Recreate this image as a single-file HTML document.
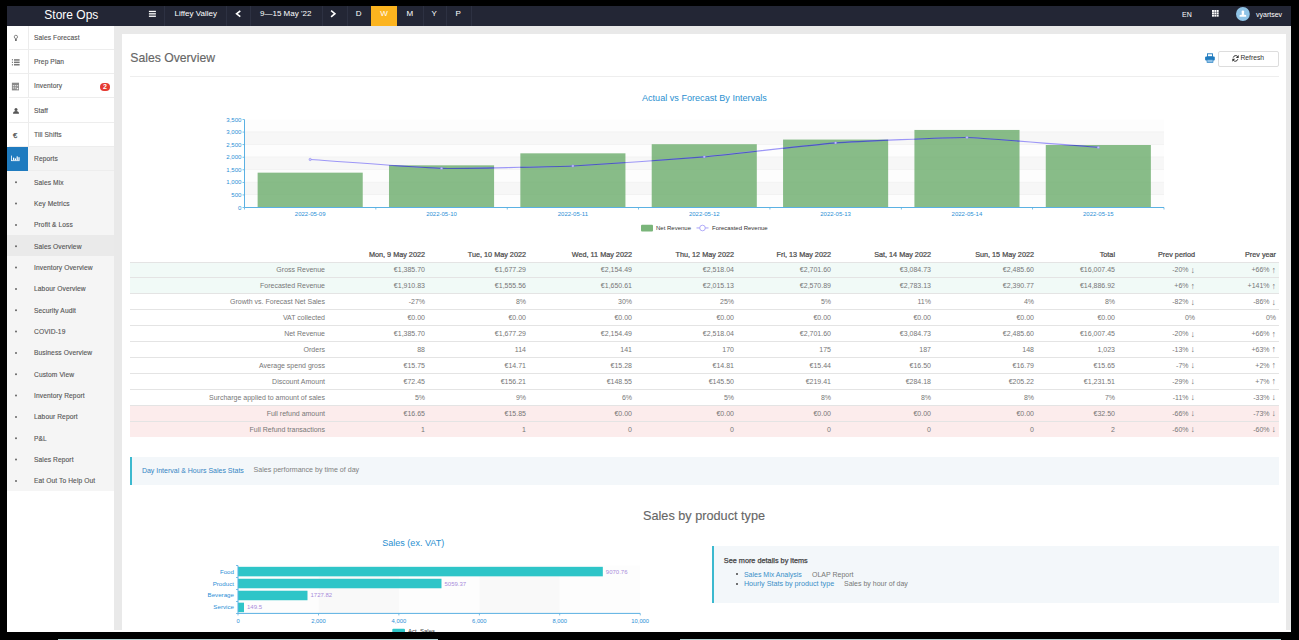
<!DOCTYPE html>
<html><head><meta charset="utf-8">
<style>
*{box-sizing:border-box;margin:0;padding:0}
html,body{width:1299px;height:640px;overflow:hidden;background:#000;font-family:"Liberation Sans",sans-serif}
.a{position:absolute}
#frame{position:absolute;left:7px;top:6px;width:1284px;height:626px;background:#fff;overflow:hidden}
#nav{position:absolute;left:7px;top:6px;width:1284px;height:20px;background:#232635;color:#fff}
.nt{position:absolute;white-space:nowrap;line-height:1}
.nd{position:absolute;top:0;width:1px;height:20px;background:#2d3142}
#side{position:absolute;left:7px;top:26px;width:107.4px;height:606px;background:#fff}
.row{position:absolute;left:0;width:107.4px;height:24.17px}
.row .ic{position:absolute;left:0;top:0;width:22px;height:100%;border-right:1px solid #ececec}
.row .tx{position:absolute;left:27px;top:0;line-height:24px;font-size:6.65px;letter-spacing:0.1px;color:#555;white-space:nowrap;-webkit-text-stroke:0.12px #555}
.row .ln{position:absolute;left:2px;right:0;bottom:0;height:1px;background:#ededed}
.sub{position:absolute;left:0;width:107.4px;height:21.33px}
.sub .tx{position:absolute;left:27px;top:0.8px;line-height:21.33px;font-size:6.65px;letter-spacing:0.1px;color:#555;white-space:nowrap;-webkit-text-stroke:0.12px #555}
.sub .bl{position:absolute;left:8.3px;top:10.3px;width:1.6px;height:1.6px;background:#777;border-radius:0.8px}
#gray{position:absolute;left:114.4px;top:26px;width:1176.6px;height:604px;background:#e9e9e9}
#card{position:absolute;left:122px;top:33.5px;width:1164px;height:596.5px;background:#fff}
table.dt{position:absolute;left:130px;top:246px;border-collapse:collapse;font-size:7px;color:#777;table-layout:fixed}
table.dt td,table.dt th{text-align:right;padding:0 3px 0 0;height:15.95px;white-space:nowrap;border-top:1px solid #e4e4e4}
table.dt th{color:#4a4a4a;font-weight:normal;font-size:7.25px;-webkit-text-stroke:0.22px #4a4a4a;border-top:none;height:16px;padding-top:1px}
.ar{font-size:9px;line-height:0;position:relative;top:0.3px}
table.dt tr.g td{background:#f1faf7}
table.dt tr.r td{background:#fcecec}
</style></head><body>
<div id="frame"></div>
<div class="a" style="left:58px;top:639px;width:380px;height:1px;background:#b3d3d3"></div>
<div class="a" style="left:680px;top:639px;width:601px;height:1px;background:#b3d3d3"></div>

<!-- NAVBAR -->
<div id="nav">
  <div class="nt" style="left:37.3px;top:3.2px;font-size:12px">Store Ops</div>
  <div class="nd" style="left:157px"></div>
  <div class="nt" style="left:167.5px;top:4px;font-size:8px">Liffey Valley</div>
  <div class="nd" style="left:218.5px"></div>
  <div class="nd" style="left:243px"></div>
  <div class="nt" style="left:253px;top:4px;font-size:8px">9&#8212;15 May '22</div>
  <div class="nd" style="left:314.5px"></div>
  <div class="nd" style="left:339.5px"></div>
  <div class="a" style="left:364px;top:0;width:26px;height:20px;background:#fcb41f"></div>
  <div class="nt" style="left:339.5px;width:24.5px;text-align:center;top:4px;font-size:8px">D</div>
  <div class="nt" style="left:364px;width:26px;text-align:center;top:4px;font-size:8px">W</div>
  <div class="nd" style="left:415.5px"></div>
  <div class="nt" style="left:390px;width:25.5px;text-align:center;top:4px;font-size:8px">M</div>
  <div class="nd" style="left:439px"></div>
  <div class="nt" style="left:415.5px;width:23.5px;text-align:center;top:4px;font-size:8px">Y</div>
  <div class="nd" style="left:463.5px"></div>
  <div class="nt" style="left:439px;width:24.5px;text-align:center;top:4px;font-size:8px">P</div>
  <div class="nt" style="left:1175px;top:5px;font-size:7px">EN</div>
  <svg class="a" style="left:1204.5px;top:3.6px" width="7" height="7" viewBox="0 0 7 7" fill="#fff"><rect x="0.00" y="0.00" width="1.95" height="1.95"/><rect x="2.35" y="0.00" width="1.95" height="1.95"/><rect x="4.70" y="0.00" width="1.95" height="1.95"/><rect x="0.00" y="2.35" width="1.95" height="1.95"/><rect x="2.35" y="2.35" width="1.95" height="1.95"/><rect x="4.70" y="2.35" width="1.95" height="1.95"/><rect x="0.00" y="4.70" width="1.95" height="1.95"/><rect x="2.35" y="4.70" width="1.95" height="1.95"/><rect x="4.70" y="4.70" width="1.95" height="1.95"/></svg>
  <svg class="a" style="left:1229px;top:0.6px" width="14" height="14" viewBox="0 0 14 14">
    <circle cx="6.9" cy="7" r="6.9" fill="#8fc3e6"/>
    <path d="M5.6 4.3 Q5.6 3.5 6.9 3.5 Q8.2 3.5 8.2 4.3 L8.1 6.4 Q8 7.3 7.6 7.6 L9.9 7.9 Q10.2 8 10.2 8.5 L10.2 9.8 L3.6 9.8 L3.6 8.5 Q3.6 8 3.9 7.9 L6.2 7.6 Q5.8 7.3 5.7 6.4 Z" fill="#fff"/>
  </svg>
  <div class="nt" style="left:1249px;top:5px;font-size:7px">vyartsev</div>
</div>

<!-- CONTENT BG -->
<div id="gray"></div>
<div id="card"></div>

<!-- SIDEBAR -->
<div id="side">
  <div class="row" style="top:0"><div class="ic"></div><div class="tx">Sales Forecast</div><div class="ln"></div></div>
  <div class="row" style="top:24.17px"><div class="ic"></div><div class="tx">Prep Plan</div><div class="ln"></div></div>
  <div class="row" style="top:48.33px"><div class="ic"></div><div class="tx">Inventory</div><div class="ln"></div>
     <div class="a" style="left:92.8px;top:8.2px;width:10.4px;height:8.6px;border-radius:4.3px;background:#e53b32;color:#fff;font-size:7px;font-weight:bold;line-height:8.6px;text-align:center">2</div></div>
  <div class="row" style="top:72.5px"><div class="ic"></div><div class="tx">Staff</div><div class="ln"></div></div>
  <div class="row" style="top:96.67px"><div class="ic"></div><div class="tx">Till Shifts</div><div class="ln"></div></div>
  <div class="row" style="top:120.83px;background:#f4f4f4"><div class="ic" style="background:#1f7bbf;border-right:none;width:21px"></div><div class="tx">Reports</div><div class="ln" style="left:21px"></div></div>
  <div class="a" style="left:0;top:145px;width:107.4px;height:320px;background:#f5f5f5"></div>
  <div class="sub" style="top:145px"><div class="tx">Sales Mix</div></div>
  <div class="sub" style="top:166.33px"><div class="tx">Key Metrics</div></div>
  <div class="sub" style="top:187.67px"><div class="tx">Profit &amp; Loss</div></div>
  <div class="sub" style="top:209px;background:#eaeaea"><div class="tx">Sales Overview</div></div>
  <div class="sub" style="top:230.33px"><div class="tx">Inventory Overview</div></div>
  <div class="sub" style="top:251.67px"><div class="tx">Labour Overview</div></div>
  <div class="sub" style="top:273px"><div class="tx">Security Audit</div></div>
  <div class="sub" style="top:294.33px"><div class="tx">COVID-19</div></div>
  <div class="sub" style="top:315.67px"><div class="tx">Business Overview</div></div>
  <div class="sub" style="top:337px"><div class="tx">Custom View</div></div>
  <div class="sub" style="top:358.33px"><div class="tx">Inventory Report</div></div>
  <div class="sub" style="top:379.67px"><div class="tx">Labour Report</div></div>
  <div class="sub" style="top:401px"><div class="tx">P&amp;L</div></div>
  <div class="sub" style="top:422.33px"><div class="tx">Sales Report</div></div>
  <div class="sub" style="top:443.67px"><div class="tx">Eat Out To Help Out</div></div>
</div>

<!-- HEADER -->
<div class="nt" style="left:130.3px;top:51.6px;font-size:12.2px;color:#666;-webkit-text-stroke:0.15px #666">Sales Overview</div>
<div class="a" style="left:130px;top:76px;width:1149px;height:1px;background:#eee"></div>
<div class="a" style="left:1218.3px;top:50.7px;width:60.3px;height:16px;border:1px solid #ddd;border-radius:2px"></div>
<div class="nt" style="left:1240.4px;top:55.2px;font-size:6.75px;color:#333">Refresh</div>

<!-- TABLE -->
<table class="dt">
<colgroup><col style="width:198px"><col style="width:100px"><col style="width:101px"><col style="width:106px"><col style="width:102px"><col style="width:97px"><col style="width:100px"><col style="width:103px"><col style="width:81px"><col style="width:80px"><col style="width:81px"></colgroup>
<tr><th></th><th>Mon, 9 May 2022</th><th>Tue, 10 May 2022</th><th>Wed, 11 May 2022</th><th>Thu, 12 May 2022</th><th>Fri, 13 May 2022</th><th>Sat, 14 May 2022</th><th>Sun, 15 May 2022</th><th>Total</th><th>Prev period</th><th>Prev year</th></tr>
<tr class="g"><td>Gross Revenue</td><td>€1,385.70</td><td>€1,677.29</td><td>€2,154.49</td><td>€2,518.04</td><td>€2,701.60</td><td>€3,084.73</td><td>€2,485.60</td><td>€16,007.45</td><td>-20% <span class="ar">↓</span></td><td>+66% <span class="ar">↑</span></td></tr>
<tr class="g"><td>Forecasted Revenue</td><td>€1,910.83</td><td>€1,555.56</td><td>€1,650.61</td><td>€2,015.13</td><td>€2,570.89</td><td>€2,783.13</td><td>€2,390.77</td><td>€14,886.92</td><td>+6% <span class="ar">↑</span></td><td>+141% <span class="ar">↑</span></td></tr>
<tr><td>Growth vs. Forecast Net Sales</td><td>-27%</td><td>8%</td><td>30%</td><td>25%</td><td>5%</td><td>11%</td><td>4%</td><td>8%</td><td>-82% <span class="ar">↓</span></td><td>-86% <span class="ar">↓</span></td></tr>
<tr><td>VAT collected</td><td>€0.00</td><td>€0.00</td><td>€0.00</td><td>€0.00</td><td>€0.00</td><td>€0.00</td><td>€0.00</td><td>€0.00</td><td>0%</td><td>0%</td></tr>
<tr><td>Net Revenue</td><td>€1,385.70</td><td>€1,677.29</td><td>€2,154.49</td><td>€2,518.04</td><td>€2,701.60</td><td>€3,084.73</td><td>€2,485.60</td><td>€16,007.45</td><td>-20% <span class="ar">↓</span></td><td>+66% <span class="ar">↑</span></td></tr>
<tr><td>Orders</td><td>88</td><td>114</td><td>141</td><td>170</td><td>175</td><td>187</td><td>148</td><td>1,023</td><td>-13% <span class="ar">↓</span></td><td>+63% <span class="ar">↑</span></td></tr>
<tr><td>Average spend gross</td><td>€15.75</td><td>€14.71</td><td>€15.28</td><td>€14.81</td><td>€15.44</td><td>€16.50</td><td>€16.79</td><td>€15.65</td><td>-7% <span class="ar">↓</span></td><td>+2% <span class="ar">↑</span></td></tr>
<tr><td>Discount Amount</td><td>€72.45</td><td>€156.21</td><td>€148.55</td><td>€145.50</td><td>€219.41</td><td>€284.18</td><td>€205.22</td><td>€1,231.51</td><td>-29% <span class="ar">↓</span></td><td>+7% <span class="ar">↑</span></td></tr>
<tr><td>Surcharge applied to amount of sales</td><td>5%</td><td>9%</td><td>6%</td><td>5%</td><td>8%</td><td>8%</td><td>8%</td><td>7%</td><td>-11% <span class="ar">↓</span></td><td>-33% <span class="ar">↓</span></td></tr>
<tr class="r"><td>Full refund amount</td><td>€16.65</td><td>€15.85</td><td>€0.00</td><td>€0.00</td><td>€0.00</td><td>€0.00</td><td>€0.00</td><td>€32.50</td><td>-66% <span class="ar">↓</span></td><td>-73% <span class="ar">↓</span></td></tr>
<tr class="r"><td>Full Refund transactions</td><td>1</td><td>1</td><td>0</td><td>0</td><td>0</td><td>0</td><td>0</td><td>2</td><td>-60% <span class="ar">↓</span></td><td>-60% <span class="ar">↓</span></td></tr>
</table>

<!-- BANNER -->
<div class="a" style="left:130px;top:456.6px;width:1149px;height:28.4px;background:#f3f7fa;border-left:2px solid #3cb9cf"></div>
<div class="nt" style="left:141.9px;top:466.7px;font-size:7px;color:#3385c4">Day Interval &amp; Hours Sales Stats</div>
<div class="nt" style="left:253.5px;top:467.3px;font-size:7.1px;color:#808080">Sales performance by time of day</div>

<div class="nt" style="left:643px;top:510px;font-size:12.7px;color:#666;-webkit-text-stroke:0.12px #666">Sales by product type</div>

<!-- INFO BOX -->
<div class="a" style="left:712px;top:546px;width:567px;height:56.7px;background:#f3f7fa;border-left:2px solid #3cb9cf"></div>
<div class="nt" style="left:723.8px;top:556.5px;font-size:7.3px;color:#444;-webkit-text-stroke:0.25px #444">See more details by items</div>
<div class="a" style="left:735.5px;top:573.3px;width:2px;height:2px;border-radius:1px;background:#444"></div>
<div class="a" style="left:735.5px;top:582.7px;width:2px;height:2px;border-radius:1px;background:#444"></div>
<div class="nt" style="left:743.9px;top:570.5px;font-size:7px;color:#3a8fc8">Sales Mix Analysis</div>
<div class="nt" style="left:812px;top:570.5px;font-size:7px;color:#777">OLAP Report</div>
<div class="nt" style="left:743.9px;top:580px;font-size:7.2px;color:#3a8fc8">Hourly Stats by product type</div>
<div class="nt" style="left:844px;top:580px;font-size:7px;color:#777">Sales by hour of day</div>

<!-- CHARTS SVG -->
<svg class="a" style="left:0;top:0" width="1299" height="632" viewBox="0 0 1299 632" font-family="Liberation Sans, sans-serif">
<text x="704.4" y="101" font-size="9.1" fill="#2a8fd0" text-anchor="middle">Actual vs Forecast By Intervals</text>
<rect x="244.5" y="119.50" width="919.5" height="12.57" fill="#fdfdfd"/>
<rect x="244.5" y="132.07" width="919.5" height="12.57" fill="#f7f7f7"/>
<rect x="244.5" y="144.64" width="919.5" height="12.57" fill="#fdfdfd"/>
<rect x="244.5" y="157.21" width="919.5" height="12.57" fill="#f7f7f7"/>
<rect x="244.5" y="169.79" width="919.5" height="12.57" fill="#fdfdfd"/>
<rect x="244.5" y="182.36" width="919.5" height="12.57" fill="#f7f7f7"/>
<rect x="244.5" y="194.93" width="919.5" height="12.57" fill="#fdfdfd"/>
<rect x="244.5" y="131.57" width="919.5" height="0.6" fill="#eeeeee"/>
<rect x="244.5" y="144.14" width="919.5" height="0.6" fill="#eeeeee"/>
<rect x="244.5" y="156.71" width="919.5" height="0.6" fill="#eeeeee"/>
<rect x="244.5" y="169.29" width="919.5" height="0.6" fill="#eeeeee"/>
<rect x="244.5" y="181.86" width="919.5" height="0.6" fill="#eeeeee"/>
<rect x="244.5" y="194.43" width="919.5" height="0.6" fill="#eeeeee"/>
<text x="241.5" y="121.60" font-size="6.1" fill="#2b8fd6" text-anchor="end">3,500</text>
<text x="241.5" y="134.17" font-size="6.1" fill="#2b8fd6" text-anchor="end">3,000</text>
<text x="241.5" y="146.74" font-size="6.1" fill="#2b8fd6" text-anchor="end">2,500</text>
<text x="241.5" y="159.31" font-size="6.1" fill="#2b8fd6" text-anchor="end">2,000</text>
<text x="241.5" y="171.89" font-size="6.1" fill="#2b8fd6" text-anchor="end">1,500</text>
<text x="241.5" y="184.46" font-size="6.1" fill="#2b8fd6" text-anchor="end">1,000</text>
<text x="241.5" y="197.03" font-size="6.1" fill="#2b8fd6" text-anchor="end">500</text>
<text x="241.5" y="209.60" font-size="6.1" fill="#2b8fd6" text-anchor="end">0</text>
<defs><clipPath id="bars"><rect x="257.64" y="172.66" width="105.09" height="34.84"/><rect x="388.99" y="165.33" width="105.09" height="42.17"/><rect x="520.35" y="153.33" width="105.09" height="54.17"/><rect x="651.71" y="144.19" width="105.09" height="63.31"/><rect x="783.06" y="139.57" width="105.09" height="67.93"/><rect x="914.42" y="129.94" width="105.09" height="77.56"/><rect x="1045.78" y="145.00" width="105.09" height="62.50"/></clipPath></defs>
<rect x="257.64" y="172.66" width="105.09" height="34.84" fill="#6aab6a" fill-opacity="0.8"/>
<rect x="388.99" y="165.33" width="105.09" height="42.17" fill="#6aab6a" fill-opacity="0.8"/>
<rect x="520.35" y="153.33" width="105.09" height="54.17" fill="#6aab6a" fill-opacity="0.8"/>
<rect x="651.71" y="144.19" width="105.09" height="63.31" fill="#6aab6a" fill-opacity="0.8"/>
<rect x="783.06" y="139.57" width="105.09" height="67.93" fill="#6aab6a" fill-opacity="0.8"/>
<rect x="914.42" y="129.94" width="105.09" height="77.56" fill="#6aab6a" fill-opacity="0.8"/>
<rect x="1045.78" y="145.00" width="105.09" height="62.50" fill="#6aab6a" fill-opacity="0.8"/>
<path d="M310.18 159.46 C318.06 159.99 425.77 168.00 441.54 168.39 C457.30 168.78 557.13 166.69 572.89 166.00 C588.66 165.31 688.49 158.22 704.25 156.83 C720.01 155.45 819.84 144.02 835.61 142.86 C851.37 141.70 951.20 137.25 966.96 137.52 C982.73 137.80 1090.44 146.80 1098.32 147.39" fill="none" stroke="#9d97f7" stroke-width="1.1"/>
<path d="M310.18 159.46 C318.06 159.99 425.77 168.00 441.54 168.39 C457.30 168.78 557.13 166.69 572.89 166.00 C588.66 165.31 688.49 158.22 704.25 156.83 C720.01 155.45 819.84 144.02 835.61 142.86 C851.37 141.70 951.20 137.25 966.96 137.52 C982.73 137.80 1090.44 146.80 1098.32 147.39" fill="none" stroke="#4a5cb8" stroke-width="1.1" clip-path="url(#bars)"/>
<circle cx="310.18" cy="159.46" r="1.2" fill="#c9c5fb" stroke="#7f78ee" stroke-width="0.4"/>
<circle cx="441.54" cy="168.39" r="1.2" fill="#c9c5fb" stroke="#7f78ee" stroke-width="0.4"/>
<circle cx="572.89" cy="166.00" r="1.2" fill="#c9c5fb" stroke="#7f78ee" stroke-width="0.4"/>
<circle cx="704.25" cy="156.83" r="1.2" fill="#c9c5fb" stroke="#7f78ee" stroke-width="0.4"/>
<circle cx="835.61" cy="142.86" r="1.2" fill="#c9c5fb" stroke="#7f78ee" stroke-width="0.4"/>
<circle cx="966.96" cy="137.52" r="1.2" fill="#c9c5fb" stroke="#7f78ee" stroke-width="0.4"/>
<circle cx="1098.32" cy="147.39" r="1.2" fill="#c9c5fb" stroke="#7f78ee" stroke-width="0.4"/>
<rect x="244.0" y="119.5" width="1" height="88.0" fill="#5bb1e3"/>
<rect x="244.5" y="207.0" width="919.5" height="1" fill="#5bb1e3"/>
<rect x="244.10" y="207.5" width="0.8" height="2" fill="#5bb1e3"/>
<rect x="375.46" y="207.5" width="0.8" height="2" fill="#5bb1e3"/>
<rect x="506.81" y="207.5" width="0.8" height="2" fill="#5bb1e3"/>
<rect x="638.17" y="207.5" width="0.8" height="2" fill="#5bb1e3"/>
<rect x="769.53" y="207.5" width="0.8" height="2" fill="#5bb1e3"/>
<rect x="900.89" y="207.5" width="0.8" height="2" fill="#5bb1e3"/>
<rect x="1032.24" y="207.5" width="0.8" height="2" fill="#5bb1e3"/>
<rect x="1163.60" y="207.5" width="0.8" height="2" fill="#5bb1e3"/>
<rect x="242.5" y="119.10" width="2" height="0.8" fill="#5bb1e3"/>
<rect x="242.5" y="131.67" width="2" height="0.8" fill="#5bb1e3"/>
<rect x="242.5" y="144.24" width="2" height="0.8" fill="#5bb1e3"/>
<rect x="242.5" y="156.81" width="2" height="0.8" fill="#5bb1e3"/>
<rect x="242.5" y="169.39" width="2" height="0.8" fill="#5bb1e3"/>
<rect x="242.5" y="181.96" width="2" height="0.8" fill="#5bb1e3"/>
<rect x="242.5" y="194.53" width="2" height="0.8" fill="#5bb1e3"/>
<rect x="242.5" y="207.10" width="2" height="0.8" fill="#5bb1e3"/>
<text x="310.18" y="216" font-size="6" fill="#2b8fd6" text-anchor="middle">2022-05-09</text>
<text x="441.54" y="216" font-size="6" fill="#2b8fd6" text-anchor="middle">2022-05-10</text>
<text x="572.89" y="216" font-size="6" fill="#2b8fd6" text-anchor="middle">2022-05-11</text>
<text x="704.25" y="216" font-size="6" fill="#2b8fd6" text-anchor="middle">2022-05-12</text>
<text x="835.61" y="216" font-size="6" fill="#2b8fd6" text-anchor="middle">2022-05-13</text>
<text x="966.96" y="216" font-size="6" fill="#2b8fd6" text-anchor="middle">2022-05-14</text>
<text x="1098.32" y="216" font-size="6" fill="#2b8fd6" text-anchor="middle">2022-05-15</text>
<rect x="641" y="224.7" width="12" height="6.7" rx="1" fill="#7ab57a"/>
<text x="656" y="229.9" font-size="6" fill="#333">Net Revenue</text>
<rect x="696.5" y="227.5" width="12" height="0.9" fill="#9d97f7"/>
<circle cx="702.5" cy="228" r="2.8" fill="#fff" stroke="#9d97f7" stroke-width="0.8"/>
<text x="712" y="229.9" font-size="6" fill="#333">Forecasted Revenue</text>
<text x="413.2" y="546" font-size="9.05" fill="#2a8fd0" text-anchor="middle">Sales (ex. VAT)</text>
<rect x="238.00" y="565.6" width="80.44" height="47.799999999999955" fill="#fdfdfd"/>
<rect x="318.44" y="565.6" width="80.44" height="47.799999999999955" fill="#f9f9f9"/>
<rect x="398.88" y="565.6" width="80.44" height="47.799999999999955" fill="#fdfdfd"/>
<rect x="479.32" y="565.6" width="80.44" height="47.799999999999955" fill="#f9f9f9"/>
<rect x="559.76" y="565.6" width="80.44" height="47.799999999999955" fill="#fdfdfd"/>
<rect x="238.0" y="566.83" width="364.83" height="9.5" fill="#2ec5c8"/>
<text x="605.83" y="573.58" font-size="6" fill="#a98cdb">9070.76</text>
<text x="234" y="573.58" font-size="6.2" fill="#2b8fd6" text-anchor="end">Food</text>
<rect x="236.0" y="565.20" width="2" height="0.8" fill="#5bb1e3"/>
<rect x="238.0" y="578.77" width="203.49" height="9.5" fill="#2ec5c8"/>
<text x="444.49" y="585.52" font-size="6" fill="#a98cdb">5059.37</text>
<text x="234" y="585.52" font-size="6.2" fill="#2b8fd6" text-anchor="end">Product</text>
<rect x="236.0" y="577.15" width="2" height="0.8" fill="#5bb1e3"/>
<rect x="238.0" y="590.73" width="69.49" height="9.5" fill="#2ec5c8"/>
<text x="310.49" y="597.48" font-size="6" fill="#a98cdb">1727.82</text>
<text x="234" y="597.48" font-size="6.2" fill="#2b8fd6" text-anchor="end">Beverage</text>
<rect x="236.0" y="589.10" width="2" height="0.8" fill="#5bb1e3"/>
<rect x="238.0" y="602.67" width="6.01" height="9.5" fill="#2ec5c8"/>
<text x="247.01" y="609.42" font-size="6" fill="#a98cdb">149.5</text>
<text x="234" y="609.42" font-size="6.2" fill="#2b8fd6" text-anchor="end">Service</text>
<rect x="236.0" y="601.05" width="2" height="0.8" fill="#5bb1e3"/>
<rect x="236.0" y="613.00" width="2" height="0.8" fill="#5bb1e3"/>
<rect x="237.5" y="565.6" width="1" height="47.799999999999955" fill="#5bb1e3"/>
<rect x="238.0" y="612.9" width="402.20000000000005" height="1" fill="#5bb1e3"/>
<rect x="237.60" y="613.4" width="0.8" height="2" fill="#5bb1e3"/>
<text x="238.00" y="622.5" font-size="5.8" fill="#2b8fd6" text-anchor="middle">0</text>
<rect x="318.04" y="613.4" width="0.8" height="2" fill="#5bb1e3"/>
<text x="318.44" y="622.5" font-size="5.8" fill="#2b8fd6" text-anchor="middle">2,000</text>
<rect x="398.48" y="613.4" width="0.8" height="2" fill="#5bb1e3"/>
<text x="398.88" y="622.5" font-size="5.8" fill="#2b8fd6" text-anchor="middle">4,000</text>
<rect x="478.92" y="613.4" width="0.8" height="2" fill="#5bb1e3"/>
<text x="479.32" y="622.5" font-size="5.8" fill="#2b8fd6" text-anchor="middle">6,000</text>
<rect x="559.36" y="613.4" width="0.8" height="2" fill="#5bb1e3"/>
<text x="559.76" y="622.5" font-size="5.8" fill="#2b8fd6" text-anchor="middle">8,000</text>
<rect x="639.80" y="613.4" width="0.8" height="2" fill="#5bb1e3"/>
<text x="640.20" y="622.5" font-size="5.8" fill="#2b8fd6" text-anchor="middle">10,000</text>
<rect x="392.3" y="628.8" width="12.7" height="7" rx="1" fill="#2ec5c8"/>
<text x="408" y="633.3" font-size="6" fill="#333">Act. Sales</text>
<g fill="#fff"><rect x="148.9" y="10.8" width="7" height="1.3"/><rect x="148.9" y="13.2" width="7" height="1.3"/><rect x="148.9" y="15.6" width="7" height="1.3"/></g>
<path d="M240.3 10.9 L236.6 13.8 L240.3 16.7" fill="none" stroke="#fff" stroke-width="1.6" stroke-linecap="butt" stroke-linejoin="miter"/>
<path d="M331.1 10.6 L334.9 13.7 L331.1 16.8" fill="none" stroke="#fff" stroke-width="1.6" stroke-linejoin="miter"/>
<g fill="#666" stroke="none">
<circle cx="15.9" cy="36.9" r="1.65" fill="none" stroke="#666" stroke-width="0.75"/><rect x="15.0" y="38.9" width="1.8" height="2" rx="0.4"/>
<rect x="11.9" y="59.2" width="1" height="1.2"/><rect x="11.9" y="61.7" width="1" height="1.2"/><rect x="11.9" y="64.2" width="1" height="1.2"/>
<rect x="14" y="59.2" width="5.6" height="1.5" fill="#777"/><rect x="14" y="61.6" width="5.6" height="1.5" fill="#777"/><rect x="14" y="64.0" width="5.6" height="1.5" fill="#777"/>
<rect x="11.9" y="82.7" width="7.1" height="7.7" fill="#8a8a8a"/><g fill="#ddd"><rect x="12.8" y="85.0" width="1.4" height="1.3"/><rect x="14.8" y="85.0" width="1.4" height="1.3"/><rect x="16.8" y="85.0" width="1.4" height="1.3"/><rect x="12.8" y="87.3" width="1.4" height="1.3"/><rect x="14.8" y="87.3" width="1.4" height="1.3"/><rect x="16.8" y="87.8" width="1.4" height="1.5" fill="#fff"/></g>
<circle cx="16" cy="109.6" r="1.5" fill="#555"/><path d="M13 113.7 Q13 110.9 16 110.9 Q19 110.9 19 113.7 Z" fill="#555"/>
</g>
<text x="13.0" y="137.8" font-size="7.6" fill="#555" stroke="#555" stroke-width="0.25">&#8364;</text>
<g fill="#fff"><rect x="11.2" y="155.6" width="0.8" height="5.4"/><rect x="11.2" y="160.3" width="8.4" height="0.8"/><rect x="13" y="157.6" width="1.2" height="2.7"/><rect x="14.8" y="158.4" width="1.2" height="1.9"/><rect x="16.6" y="156.4" width="1.2" height="3.9"/><rect x="18.4" y="157.2" width="1.2" height="3.1"/></g>
<circle cx="16" cy="182.27" r="1" fill="#666"/>
<circle cx="16" cy="203.60" r="1" fill="#666"/>
<circle cx="16" cy="224.93" r="1" fill="#666"/>
<circle cx="16" cy="246.27" r="1" fill="#666"/>
<circle cx="16" cy="267.60" r="1" fill="#666"/>
<circle cx="16" cy="288.93" r="1" fill="#666"/>
<circle cx="16" cy="310.26" r="1" fill="#666"/>
<circle cx="16" cy="331.60" r="1" fill="#666"/>
<circle cx="16" cy="352.93" r="1" fill="#666"/>
<circle cx="16" cy="374.26" r="1" fill="#666"/>
<circle cx="16" cy="395.60" r="1" fill="#666"/>
<circle cx="16" cy="416.93" r="1" fill="#666"/>
<circle cx="16" cy="438.26" r="1" fill="#666"/>
<circle cx="16" cy="459.60" r="1" fill="#666"/>
<circle cx="16" cy="480.93" r="1" fill="#666"/>
<g fill="#1f7bbf"><rect x="1207.5" y="53.8" width="5" height="3" fill="#fff" stroke="#1f7bbf" stroke-width="0.9"/><rect x="1205.1" y="56.5" width="9.7" height="4" rx="1"/><rect x="1207" y="59.5" width="6" height="3.1" fill="#8fc0e6" stroke="#1f7bbf" stroke-width="0.6"/></g>
<g fill="none" stroke="#333" stroke-width="1"><path d="M1237.8 56.6 A2.6 2.6 0 0 0 1233.2 57.6"/><path d="M1233.2 60.2 A2.6 2.6 0 0 0 1237.8 59.2"/></g><path d="M1238.7 55 L1238.7 58 L1235.8 58 Z" fill="#333"/><path d="M1232.3 61.8 L1232.3 58.8 L1235.2 58.8 Z" fill="#333"/>
</svg>
</body></html>
